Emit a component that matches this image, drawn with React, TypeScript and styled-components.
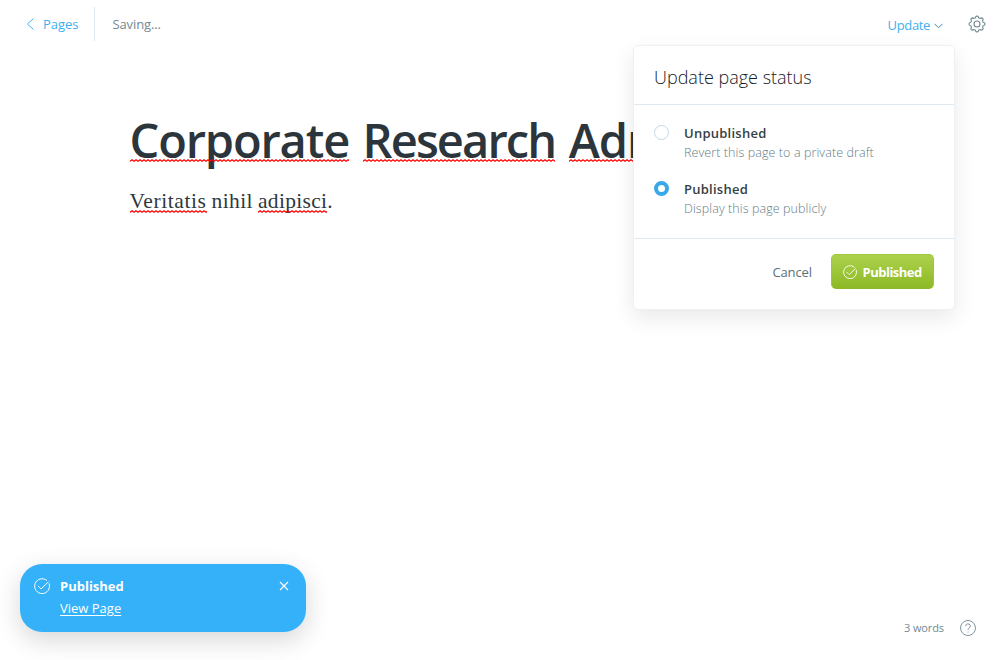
import React from "react";
import styled, { createGlobalStyle } from "styled-components";

const Global = createGlobalStyle`
  * { box-sizing: border-box; }
  body { margin: 0; background: #fff; overflow: hidden; }
  button { background: none; border: 0; padding: 0; margin: 0; font: inherit; }
`;

const Page = styled.div`
  position: relative;
  display: flex;
  flex-direction: column;
  width: 1000px;
  height: 660px;
  overflow: hidden;
  font-family: "Open Sans", "Noto Sans", sans-serif;
  font-size: 13px;
  color: #394047;
`;

const Header = styled.header`
  display: flex;
  justify-content: space-between;
  height: 48px;
  padding: 7px 14px 7px 26px;
`;

const HeaderGroup = styled.div`
  display: flex;
  align-items: center;
`;

const BackLink = styled.a`
  display: flex;
  align-items: center;
  gap: 8px;
  width: 69px;
  height: 34px;
  border-right: 1px solid #dfe9f1;
  color: #3eb0ef;
`;

const SaveStatus = styled.span`
  margin-left: 17.5px;
  color: #738a94;
`;

const UpdateButton = styled.button`
  display: flex;
  align-items: center;
  gap: 4px;
  margin: 2px 25px 0 0;
  color: #3eb0ef;
  svg {
    margin-top: 2px;
  }
`;

const Text = styled.span<{ $spacing?: number }>`
  letter-spacing: ${(p) => p.$spacing ?? 0}px;
  white-space: nowrap;
`;

const Editor = styled.main`
  flex: 1;
  padding: 57px 0 0 129.5px;
`;

const PostTitle = styled.h1`
  display: flex;
  gap: 13.5px;
  margin: 0;
  font-size: 47px;
  font-weight: 600;
  line-height: 70px;
  color: #2b353b;
`;

const PostBody = styled.p`
  display: flex;
  gap: 5px;
  margin: 11px 0 0;
  font-family: "Liberation Serif", Georgia, serif;
  font-size: 21.5px;
  line-height: 30px;
  color: #2f383e;
`;

const BodyEnd = styled.span`
  display: flex;
`;

const Misspelled = styled.span<{ $spacing?: number; $line: number }>`
  position: relative;
  letter-spacing: ${(p) => p.$spacing ?? 0}px;
  white-space: nowrap;
  svg {
    position: absolute;
    left: 0;
    top: ${(p) => p.$line}px;
    width: 100%;
    height: 3px;
  }
`;

const Footer = styled.footer`
  display: flex;
  justify-content: flex-end;
  align-items: center;
  gap: 16px;
  height: 64px;
  padding-right: 24px;
  font-size: 11px;
  color: #738a94;
`;

const WordCount = styled.span`
  margin-top: -2px;
  letter-spacing: -0.1px;
`;

const Popover = styled.section`
  position: absolute;
  left: 633px;
  top: 45px;
  width: 322px;
  height: 265px;
  border: 1px solid #eef1f3;
  border-radius: 5px;
  background: #fff;
  box-shadow: 0 8px 22px rgba(0, 0, 0, 0.09);
`;

const PopoverTitle = styled.h2`
  height: 59px;
  margin: 0;
  padding: 18px 20px 0;
  border-bottom: 1px solid #dfe9f1;
  font-size: 18px;
  font-weight: 300;
  line-height: 26px;
  color: #15212a;
`;

const Options = styled.div`
  display: flex;
  flex-direction: column;
  gap: 17px;
  height: 134px;
  padding: 18px 20px 0;
  border-bottom: 1px solid #dfe9f1;
`;

const Option = styled.div`
  display: flex;
  gap: 15px;
  height: 39px;
`;

const Radio = styled.span<{ $checked?: boolean }>`
  width: 15px;
  height: 15px;
  margin-top: 2px;
  border: ${(p) => (p.$checked ? "4px solid #3aa7e8" : "1px solid #c3d9e8")};
  border-radius: 50%;
  background: #fff;
`;

const OptionText = styled.div`
  display: flex;
  flex-direction: column;
  margin-top: 1px;
  line-height: 19px;
`;

const OptionLabel = styled.strong`
  font-weight: 600;
  letter-spacing: 0.25px;
  color: #343f44;
`;

const OptionHint = styled.span`
  font-size: 12.5px;
  font-weight: 300;
  line-height: 20px;
  letter-spacing: 0.09px;
  color: #647c87;
`;

const Actions = styled.div`
  display: flex;
  justify-content: flex-end;
  align-items: center;
  gap: 19px;
  padding: 15px 20px 0 0;
  color: #5b7079;
`;

const PublishButton = styled.button`
  display: flex;
  align-items: center;
  gap: 6px;
  width: 103px;
  height: 35px;
  padding-left: 10.5px;
  border: 1px solid #9fc63c;
  border-bottom-color: #8db829;
  border-radius: 5px;
  background: linear-gradient(#acd24c, #8db926);
  font-weight: 700;
  color: #fff;
`;

const Toast = styled.aside`
  position: absolute;
  left: 20px;
  top: 564px;
  display: flex;
  gap: 10px;
  width: 286px;
  height: 68px;
  padding: 14px 17px 0 14px;
  border-radius: 22px;
  background: #35b1f9;
  box-shadow: 0 8px 26px rgba(0, 0, 0, 0.16);
  color: #fff;
`;

const ToastText = styled.div`
  display: flex;
  flex: 1;
  flex-direction: column;
  align-items: flex-start;
  line-height: 20px;
  gap: 2px;
  margin-top: -2px;
`;

const ToastTitle = styled.strong`
  font-weight: 700;
`;

const ToastLink = styled.a`
  text-decoration: underline;
  text-underline-offset: 2px;
`;

const CloseButton = styled.button`
  display: flex;
  align-self: flex-start;
  margin: 3px 0 0;
  color: #fff;
`;

function Squiggle({ id }: { id: string }) {
  return (
    <svg aria-hidden="true">
      <defs>
        <pattern id={id} width="4" height="3" patternUnits="userSpaceOnUse">
          <path d="M-1 1.5 0 2.2 2 .8 4 2.2 5 1.5" fill="none" stroke="#f00" strokeWidth="1.3" />
        </pattern>
      </defs>
      <rect width="100%" height="3" fill={`url(#${id})`} />
    </svg>
  );
}

function CheckCircle({ size }: { size: number }) {
  return (
    <svg width={size} height={size} viewBox="0 0 24 24" fill="none" stroke="currentColor" strokeWidth="1.5" strokeLinecap="round" strokeLinejoin="round">
      <path d="M22.8 8.6A11.2 11.2 0 1 1 19 3.3" />
      <path d="m6.5 12.3 4.2 4.2L21.3 6" />
    </svg>
  );
}

const TEETH = 8;
const gearOutline =
  Array.from({ length: 96 }, (_, i) => {
    const angle = (i / 96) * Math.PI * 2;
    const radius = 7.1 + 0.85 * Math.tanh(1.8 * Math.cos(TEETH * angle));
    const x = 9 + radius * Math.cos(angle);
    const y = 9 + radius * Math.sin(angle);
    return `${i ? "L" : "M"}${x.toFixed(2)} ${y.toFixed(2)}`;
  }).join("") + "Z";

function Gear() {
  return (
    <svg width="18" height="18" viewBox="0 0 18 18" fill="none" stroke="#738a94" strokeWidth="1.1" strokeLinejoin="round">
      <circle cx="9" cy="9" r="3" />
      <path d={gearOutline} />
    </svg>
  );
}

export default function App() {
  return (
    <Page>
      <Global />
      <Header>
        <HeaderGroup>
          <BackLink>
            <svg width="9" height="12" viewBox="0 0 9 12" fill="none" stroke="currentColor" strokeWidth="1"><path d="M7.5.5 1.5 6l6 5.5" /></svg>
            <Text $spacing={-0.05}>Pages</Text>
          </BackLink>
          <SaveStatus><Text $spacing={-0.12}>Saving...</Text></SaveStatus>
        </HeaderGroup>
        <HeaderGroup>
          <UpdateButton>
            <Text $spacing={-0.35}>Update</Text>
            <svg width="9" height="6" viewBox="0 0 9 6" fill="none" stroke="#3f8fb8" strokeWidth="1"><path d="m.5.8 4 4 4-4" /></svg>
          </UpdateButton>
          <Gear />
        </HeaderGroup>
      </Header>
      <Editor>
        <PostTitle>
          <Misspelled $line={54} $spacing={-1.15}>Corporate<Squiggle id="sq1" /></Misspelled>
          <Misspelled $line={54} $spacing={-1.9}>Research<Squiggle id="sq2" /></Misspelled>
          <Misspelled $line={54} $spacing={-1}>Administrator<Squiggle id="sq3" /></Misspelled>
        </PostTitle>
        <PostBody>
          <Misspelled $line={24} $spacing={0.6}>Veritatis<Squiggle id="sq4" /></Misspelled>
          <Text $spacing={0.4}>nihil</Text>
          <BodyEnd><Misspelled $line={24} $spacing={0.3}>adipisci<Squiggle id="sq5" /></Misspelled>.</BodyEnd>
        </PostBody>
      </Editor>
      <Footer>
        <WordCount>3 words</WordCount>
        <svg width="16" height="16" viewBox="0 0 16 16" fill="none" stroke="currentColor" strokeWidth=".9">
          <circle cx="8" cy="8" r="7.5" />
          <path d="M5.7 6.2a2.3 2.3 0 1 1 3.5 1.9C8.4 8.6 8 8.9 8 9.9M8 11.6v1" />
        </svg>
      </Footer>
      <Popover>
        <PopoverTitle><Text>Update page status</Text></PopoverTitle>
        <Options>
          <Option>
            <Radio />
            <OptionText>
              <OptionLabel>Unpublished</OptionLabel>
              <OptionHint>Revert this page to a private draft</OptionHint>
            </OptionText>
          </Option>
          <Option>
            <Radio $checked />
            <OptionText>
              <OptionLabel>Published</OptionLabel>
              <OptionHint>Display this page publicly</OptionHint>
            </OptionText>
          </Option>
        </Options>
        <Actions>
          <Text $spacing={-0.1}>Cancel</Text>
          <PublishButton><CheckCircle size={14} /><Text $spacing={-0.5}>Published</Text></PublishButton>
        </Actions>
      </Popover>
      <Toast>
        <CheckCircle size={16} />
        <ToastText>
          <ToastTitle><Text>Published</Text></ToastTitle>
          <ToastLink><Text>View Page</Text></ToastLink>
        </ToastText>
        <CloseButton>
          <svg width="10" height="10" viewBox="0 0 10 10" fill="none" stroke="currentColor" strokeWidth="1.2"><path d="m1 1 8 8M9 1 1 9" /></svg>
        </CloseButton>
      </Toast>
    </Page>
  );
}
